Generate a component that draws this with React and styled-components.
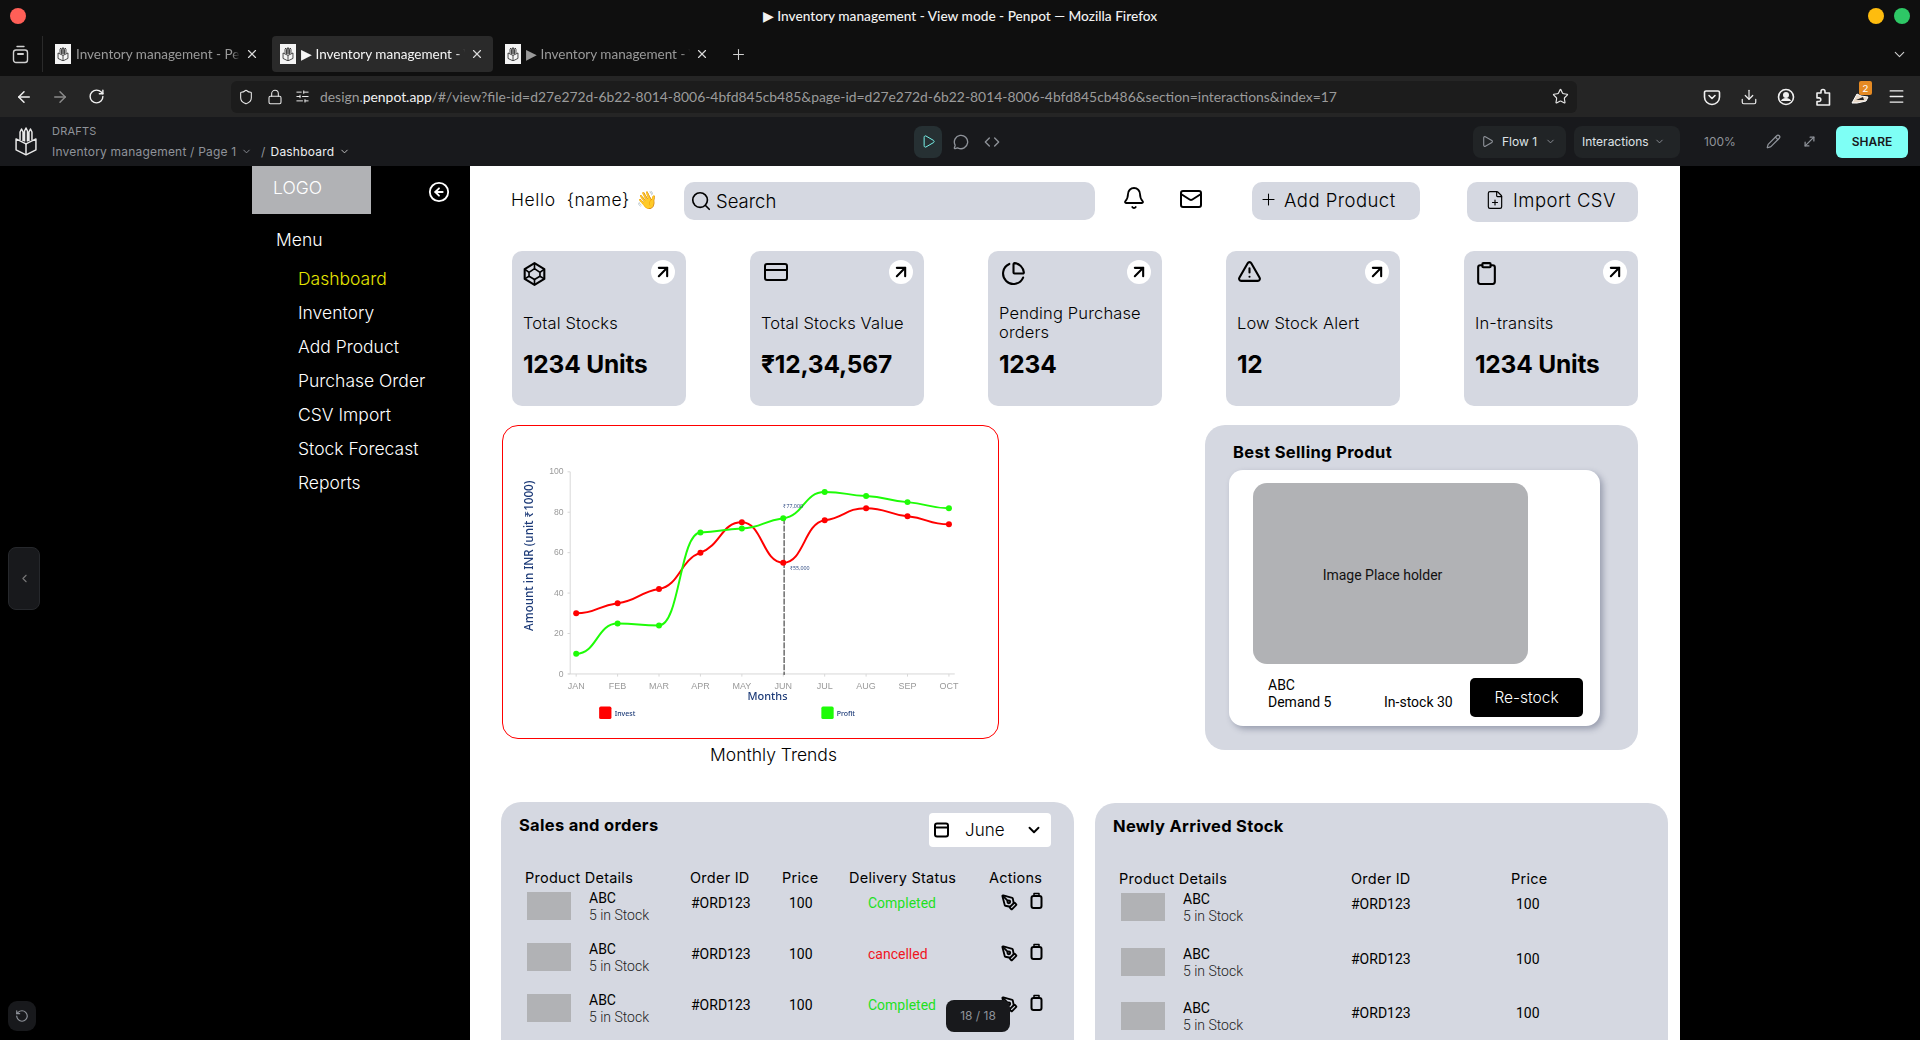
import React from "react";
import styled, { createGlobalStyle } from "styled-components";
import {
  ArrowLeft, ArrowRight, ArrowUpRight, Bell, ChevronDown, CircleArrowLeft, Code,
  Download, FilePlus, Lock, Mail, Menu, MessageCircle, MoveDiagonal, PenTool, PieChart, Pencil, Play,
  Plus, RotateCcw, RotateCw, Search, Shield, ChevronLeft, SlidersHorizontal, Star,
  TriangleAlert, Clipboard, X,
} from "lucide-react";

/* Global
=========================================*/
const GlobalStyle = createGlobalStyle`
  html, body { margin: 0; padding: 0; height: 100%; background: #000; overflow: hidden; }
  * { box-sizing: border-box; }
  body { font-family: "Inter", "DejaVu Sans", sans-serif; }
`;

const UI_FONT = `"Lato", "Noto Sans", sans-serif`;
const HEAD_FONT = `"Inter", "DejaVu Sans", sans-serif`;
const BODY_FONT = `"Roboto", "Liberation Sans", sans-serif`;

const Page = styled.div`
  width: 1920px;
  height: 1040px;
  overflow: hidden;
  display: flex;
  flex-direction: column;
`;

/* Browser chrome
=========================================*/
const TitleBar = styled.div`
  height: 36px;
  background: #0f0f0f;
  display: grid;
  grid-template-columns: 1fr auto 1fr;
  align-items: center;
  padding: 0 10px 4px;
  color: #f2f2f2;
  font: 500 13.7px ${UI_FONT};
`;
const TitleText = styled.span`
  margin-top: -2px;
`;
const Dot = styled.span`
  display: block;
  width: 16px;
  height: 16px;
  border-radius: 50%;
  background: ${(p) => p.$color};
`;
const Dots = styled.div`
  display: flex;
  gap: 10px;
  justify-content: flex-end;
`;
const TabBar = styled.div`
  height: 40px;
  background: #0f0f0f;
  display: flex;
  align-items: flex-start;
  color: #fff;
`;
const TabViewButton = styled.div`
  width: 43px;
  height: 36px;
  padding-top: 9px;
  padding-left: 12px;
  border-right: 1px solid #2a2a2a;
  margin-right: 4px;
  color: #d0d0d0;
`;
const Tab = styled.div`
  width: 221px;
  height: 36px;
  margin-right: 4px;
  border-radius: 4px;
  padding: 0 9px 0 8px;
  display: flex;
  align-items: center;
  gap: 5px;
  background: ${(p) => (p.$active ? "#2a2a2a" : "transparent")};
  color: ${(p) => (p.$active ? "#f5f5f5" : "#9a9a9a")};
  font: 400 13.5px ${UI_FONT};
`;
const TabTitle = styled.span`
  flex: 1;
  overflow: hidden;
  white-space: nowrap;
  mask-image: linear-gradient(to right, #000 95%, transparent);
`;
const TabClose = styled(X)`
  color: #d8d8d8;
  flex: none;
`;
const Favicon = styled.span`
  width: 16px;
  height: 20px;
  background: #f4f4f4;
  display: flex;
  align-items: center;
  justify-content: center;
  flex: none;
  color: #111;
`;
const NewTab = styled.div`
  margin: 10px 0 0 8px;
  color: #d0d0d0;
`;
const TabOverflow = styled.div`
  margin: 10px 12px 0 auto;
  color: #d0d0d0;
`;
const NavBar = styled.div`
  height: 41px;
  background: #252525;
  display: flex;
  align-items: center;
  padding-left: 15px;
  color: #f0f0f0;
`;
const NavButton = styled.span`
  width: 18px;
  display: flex;
  justify-content: center;
  margin-right: ${(p) => p.$gap ?? 18}px;
  color: ${(p) => (p.$dim ? "#8a8a8a" : "#f0f0f0")};
`;
const UrlField = styled.div`
  width: 1346px;
  height: 32px;
  margin-left: 126px;
  background: #1c1c1c;
  border-radius: 6px;
  display: flex;
  align-items: center;
  padding: 0 8px 0 7px;
  color: #e8e8e8;
`;
const UrlIcon = styled.span`
  width: 16px;
  display: flex;
  justify-content: center;
  margin-right: ${(p) => p.$gap}px;
`;
const UrlText = styled.div`
  flex: 1;
  color: #9b9b9b;
  font: 400 13.9px ${UI_FONT};
  white-space: nowrap;
  b {
    color: #f2f2f2;
    font-weight: 400;
  }
`;
const ToolGroup = styled.div`
  display: flex;
  align-items: center;
  gap: 18px;
  margin-left: 125px;
`;
const ToolIcon = styled.span`
  position: relative;
  width: 19px;
  display: flex;
  justify-content: center;
`;
const CountBadge = styled.span`
  position: absolute;
  top: -9px;
  left: 9px;
  width: 13px;
  height: 14px;
  background: #e58a23;
  border-radius: 2px;
  color: #fff;
  font: 400 10px/14px ${UI_FONT};
  text-align: center;
`;

/* Penpot toolbar
=========================================*/
const PenpotBar = styled.div`
  height: 49px;
  background: #18191c;
  display: flex;
  align-items: center;
  padding: 0 12px 0 14px;
  color: #8f939a;
  font: 400 12px ${HEAD_FONT};
`;
const BarLogo = styled.span`
  display: flex;
  color: #e8e8e8;
`;
const Crumbs = styled.div`
  width: 862px;
  margin-left: 14px;
  display: flex;
  flex-direction: column;
  gap: 6px;
  font-size: 12px;
  letter-spacing: 0.2px;
`;
const CrumbLine = styled.div`
  display: flex;
  align-items: center;
  gap: 5px;
  font-size: ${(p) => p.$size || 12}px;
  b {
    color: #eef0f2;
    font-weight: 400;
  }
`;
const PlayButton = styled.div`
  width: 28px;
  height: 32px;
  border-radius: 8px;
  background: #263033;
  color: #7efff5;
  display: flex;
  align-items: center;
  justify-content: center;
`;
const BarIcon = styled.span`
  display: flex;
  margin-left: ${(p) => p.$gap}px;
  color: #8f939a;
`;
const BarSelect = styled.div`
  width: ${(p) => p.$w}px;
  height: 32px;
  margin-left: ${(p) => p.$gap}px;
  border-radius: 8px;
  background: #212426;
  color: #dfe2e5;
  display: flex;
  align-items: center;
  gap: ${(p) => p.$inner || 5}px;
  padding: 0 8px;
  font-size: 12px;
  white-space: nowrap;
`;
const Zoom = styled.span`
  width: 32px;
  margin-left: 24px;
  font-size: 12px;
`;
const ShareButton = styled.div`
  width: 72px;
  height: 32px;
  margin-left: 19px;
  border-radius: 6px;
  background: #7efff5;
  color: #18191c;
  font: 600 12px/32px ${HEAD_FONT};
  text-align: center;
`;

/* Viewer
=========================================*/
const Viewer = styled.div`
  position: relative;
  flex: 1;
  display: flex;
  background: #000;
  overflow: hidden;
`;
const Gutter = styled.div`
  width: 252px;
`;
const CollapseTab = styled.div`
  position: absolute;
  left: 8px;
  top: 381px;
  width: 32px;
  height: 63px;
  background: #18191c;
  border: 1px solid #26282c;
  border-radius: 8px;
  color: #777;
  display: flex;
  align-items: center;
  justify-content: center;
`;
const ResetButton = styled.div`
  position: absolute;
  left: 8px;
  top: 835px;
  width: 28px;
  height: 30px;
  background: #18191c;
  border-radius: 9px;
  color: #8f939a;
  display: flex;
  align-items: center;
  justify-content: center;
`;
const PageCounter = styled.div`
  position: absolute;
  left: 946px;
  top: 834px;
  width: 64px;
  height: 32px;
  background: #18191c;
  border-radius: 8px;
  color: #8f939a;
  font: 400 12px/32px ${HEAD_FONT};
  text-align: center;
`;

/* Sidebar
=========================================*/
const Sidebar = styled.aside`
  width: 218px;
  color: #fff;
  font: 300 17.5px ${HEAD_FONT};
`;
const SideHead = styled.div`
  display: flex;
  align-items: flex-start;
`;
const Logo = styled.div`
  width: 119px;
  height: 48px;
  background: #b1b2b5;
  padding-left: 21px;
  color: #fff;
  line-height: 43px;
`;
const BackIcon = styled(CircleArrowLeft)`
  margin: 15px 0 0 57px;
`;
const MenuTitle = styled.div`
  margin: 15px 0 11px;
  padding-left: 24px;
  line-height: 22px;
`;
const MenuItem = styled.div`
  height: 34px;
  padding-left: 46px;
  line-height: 34px;
  color: ${(p) => (p.$active ? "#e6e600" : "#fff")};
`;

/* Main
=========================================*/
const Main = styled.main`
  width: 1210px;
  background: #fff;
  padding: 16px 0 0 42px;
  color: #000;
  overflow: hidden;
`;
const Header = styled.div`
  height: 40px;
  display: flex;
  align-items: flex-start;
`;
const Hello = styled.div`
  width: 172px;
  height: 34px;
  margin-left: -1px;
  flex: none;
  display: flex;
  align-items: center;
  font: 300 17.5px ${HEAD_FONT};
  letter-spacing: 0.6px;
  white-space: pre;
`;
const SearchBox = styled.div`
  width: 411px;
  height: 38px;
  margin-left: 1px;
  border-radius: 10px;
  background: #d5d8e1;
  display: flex;
  align-items: center;
  gap: 4px;
  padding: 0 0 1px 6px;
  font: 300 18.5px ${HEAD_FONT};
`;
const HeadIcon = styled.span`
  display: flex;
  margin: ${(p) => p.$top || 4}px 0 0 ${(p) => p.$gap}px;
`;
const HeadButton = styled.div`
  width: ${(p) => p.$w}px;
  height: ${(p) => p.$h}px;
  margin-left: ${(p) => p.$gap}px;
  border-radius: 10px;
  background: #d5d8e1;
  display: flex;
  align-items: flex-start;
  padding: 8px 0 0 ${(p) => p.$pad}px;
  gap: ${(p) => p.$inner}px;
  font: 300 18.5px/20px ${HEAD_FONT};
  letter-spacing: 0.45px;
  white-space: nowrap;
`;

const Cards = styled.div`
  margin-top: 29px;
  display: flex;
  gap: 64px;
`;
const Card = styled.div`
  position: relative;
  width: 174px;
  height: 155px;
  border-radius: 10px;
  background: #d5d8e1;
  padding: 10px 11px 0;
`;
const CardIcon = styled.div`
  height: 42px;
  display: flex;
  align-items: flex-start;
  padding-left: ${(p) => p.$x || 0}px;
  svg {
    margin-top: ${(p) => p.$y || 0}px;
    margin-left: ${(p) => p.$nudge || 0}px;
  }
`;
const CardOpen = styled.span`
  position: absolute;
  top: 9px;
  right: 11px;
  width: 24px;
  height: 24px;
  border-radius: 50%;
  background: #fff;
  display: flex;
  align-items: center;
  justify-content: center;
`;
const CardLabel = styled.div`
  height: 40px;
  display: flex;
  align-items: center;
  font: 300 16.5px/19px ${HEAD_FONT};
  letter-spacing: 0.15px;
`;
const CardValue = styled.div`
  margin-top: 7px;
  font: 700 24.5px/28px ${HEAD_FONT};
  letter-spacing: -0.2px;
`;

const MidRow = styled.div`
  margin: 19px 0 0 -10px;
  display: flex;
  align-items: flex-start;
`;
const ChartColumn = styled.div`
  width: 497px;
  height: 325px;
`;
const ChartBox = styled.div`
  height: 314px;
  border: 1px solid #f00;
  border-radius: 16px;
  overflow: hidden;
`;
const ChartSvg = styled.svg`
  display: block;
  width: 100%;
  height: 100%;
  filter: blur(0.25px);
`;
const Caption = styled.div`
  margin-top: 4px;
  padding-left: 46px;
  text-align: center;
  font: 300 17.5px/24px ${HEAD_FONT};
`;

const BestCard = styled.section`
  width: 433px;
  height: 325px;
  margin-left: 206px;
  border-radius: 20px;
  background: #d5d8e1;
  padding: 15px 38px 0 24px;
`;
const PanelTitle = styled.h3`
  margin: 0 0 0 4px;
  font: 700 16.5px/24px ${HEAD_FONT};
  letter-spacing: 0.35px;
`;
const BestInner = styled.div`
  height: 256px;
  margin-top: 6px;
  border-radius: 14px;
  background: #fff;
  box-shadow: 3px 3px 6px rgba(40, 50, 80, 0.35);
  padding: 13px 17px 0 24px;
`;
const Placeholder = styled.div`
  width: 275px;
  height: 181px;
  border-radius: 14px;
  background: #b1b2b5;
  display: flex;
  align-items: center;
  justify-content: center;
  padding: 2px 16px 0 0;
  font: 400 14px ${BODY_FONT};
  color: #111;
`;
const BestFoot = styled.div`
  margin-top: 14px;
  display: flex;
  align-items: flex-start;
  font: 400 14px/17px ${BODY_FONT};
`;
const BestName = styled.div`
  width: 116px;
  margin: -1px 0 0 15px;
`;
const BestStock = styled.div`
  width: 86px;
  margin-top: 16px;
`;
const RestockButton = styled.div`
  width: 113px;
  height: 39px;
  border-radius: 5px;
  background: #000;
  color: #fff;
  font: 300 15.5px/39px ${HEAD_FONT};
  text-align: center;
`;

const BottomRow = styled.div`
  margin: 52px 0 0 -11px;
  display: flex;
  gap: 21px;
  align-items: flex-start;
`;
const Panel = styled.section`
  width: 573px;
  height: 260px;
  margin-top: ${(p) => p.$top || 0}px;
  border-radius: 20px 20px 0 0;
  background: #d5d8e1;
  padding: 11px 0 0 18px;
`;
const PanelHead = styled.div`
  height: 34px;
  display: flex;
  align-items: flex-start;
  justify-content: space-between;
  padding-right: 23px;
  h3 {
    margin: 0;
    font: 700 16.5px/24px ${HEAD_FONT};
    letter-spacing: 0.3px;
  }
`;
const MonthSelect = styled.div`
  width: 122px;
  height: 34px;
  border-radius: 4px;
  background: #fff;
  display: flex;
  align-items: center;
  padding-left: 4px;
  font: 300 17px ${HEAD_FONT};
  span {
    width: 60px;
    margin-left: 14px;
  }
`;
const TableRow = styled.div`
  display: grid;
  grid-template-columns: ${(p) => p.$cols};
  padding-left: 6px;
  height: ${(p) => p.$h}px;
  align-items: start;
`;
const TableHead = styled(TableRow)`
  margin-top: 21px;
  margin-bottom: 4px;
  font: 400 14.5px/20px ${HEAD_FONT};
  letter-spacing: 0.25px;
`;
const ProductCell = styled.div`
  display: flex;
  padding-left: 2px;
`;
const Thumb = styled.div`
  width: 44px;
  height: 28px;
  background: #b1b2b5;
`;
const ProductText = styled.div`
  margin: -2px 0 0 18px;
  font: 400 14px/17px ${BODY_FONT};
  small {
    display: block;
    font-size: 14px;
    font-weight: 300;
    color: #222;
  }
`;
const Cell = styled.div`
  padding-left: ${(p) => p.$pad || 0}px;
  font: 400 14px/22px ${BODY_FONT};
  color: ${(p) => p.$color || "#000"};
`;
const Actions = styled.div`
  display: flex;
  align-items: center;
  gap: 12px;
  height: 20px;
  padding-left: 12px;
`;
const TrashSvg = styled.svg`
  margin-top: -3px;
`;

/* Icons drawn by hand
=========================================*/
function PenpotLogo({ size }) {
  return (
    <svg width={size} height={size * 1.2} viewBox="0 0 24 29" fill="none" stroke="currentColor" strokeWidth="1.5" strokeLinejoin="round">
      <path d="M2 12v11l10 5 10-5V12l-10 5z" />
      <path d="M12 17v11" />
      <path d="M6 13V5l1.500-3L9 5v9M10.500 14.500V4l1.500-3 1.500 3v10.500M15 14V5l1.500-3L18 5v8" />
    </svg>
  );
}

function StockIcon() {
  return (
    <svg width="23" height="24" viewBox="2 1 20 22" fill="none" stroke="#000" strokeWidth="1.900" strokeLinejoin="round">
      <path d="M12 2l9 5.500v9L12 22l-9-5.500v-9z" />
      <path d="M12 7l5 3.500v3.500L12 17l-5-3v-3.500z" strokeWidth="1.500" />
      <path d="M12 2v5M3 7.500l4 3M21 7.500l-4 3M12 17v5M3 16.500L7 14M21 16.500L17 14" strokeWidth="1.500" />
    </svg>
  );
}

function CardBillIcon() {
  return (
    <svg width="24" height="24" viewBox="0 0 24 24" fill="none" stroke="#000" strokeWidth="2">
      <rect x="1" y="3" width="22" height="16" rx="2" />
      <path d="M1 9h22" />
    </svg>
  );
}

function TrashIcon() {
  return (
    <TrashSvg width="13" height="17" viewBox="0 0 13 17" fill="none" stroke="#000" strokeWidth="2" strokeLinejoin="round">
      <rect x="1.500" y="4" width="10" height="12" rx="2" />
      <path d="M4 1.500h5V4H4z" strokeWidth="1.500" />
    </TrashSvg>
  );
}

function CalendarIcon() {
  return (
    <svg width="18" height="18" viewBox="0 0 18 18" fill="none" stroke="#000" strokeWidth="2">
      <rect x="2" y="2.500" width="13" height="13" rx="2" />
      <path d="M2 6.500h13" />
    </svg>
  );
}

function PocketIcon() {
  return (
    <svg width="18" height="18" viewBox="0 0 18 18" fill="none" stroke="currentColor" strokeWidth="1.600" strokeLinecap="round" strokeLinejoin="round">
      <path d="M3 3h12a1.500 1.500 0 0 1 1.500 1.500V9a7.500 7.500 0 0 1-15 0V4.500A1.500 1.500 0 0 1 3 3z" />
      <path d="M6 7.500l3 3 3-3" />
    </svg>
  );
}

function ProfileIcon() {
  return (
    <svg width="18" height="18" viewBox="0 0 18 18" fill="none" stroke="currentColor" strokeWidth="1.600">
      <circle cx="9" cy="9" r="7.500" />
      <circle cx="9" cy="7" r="3" fill="currentColor" stroke="none" />
      <path d="M4 13a5 3 0 0 1 10 0z" fill="currentColor" stroke="none" />
    </svg>
  );
}

function PuzzleIcon() {
  return (
    <svg width="16" height="18" viewBox="0 0 16 18" fill="none" stroke="currentColor" strokeWidth="1.600" strokeLinejoin="round">
      <path d="M2 5h4V3.500a2 2 0 0 1 4 0V5h4.500v12H2v-3.500h2a1.800 1.800 0 0 0 0-3.600H2z" />
    </svg>
  );
}

function TabViewIcon() {
  return (
    <svg width="17" height="19" viewBox="0 0 17 19" fill="none" stroke="currentColor" strokeWidth="1.400" strokeLinecap="round">
      <path d="M5 1.500h7" />
      <rect x="1.500" y="5" width="14" height="12.500" rx="2.500" />
      <path d="M6 9h5" strokeWidth="2" />
    </svg>
  );
}

function ExtensionIcon() {
  return (
    <svg width="18" height="14" viewBox="0 0 18 14">
      <path d="M1 13l5-9 4 2 7 1-2 4-9 2z" fill="#e9d9c8" stroke="#fff" />
      <path d="M5 10l7-3 1 3z" fill="#222" />
    </svg>
  );
}

/* Chart
=========================================*/
const MONTHS = ["JAN", "FEB", "MAR", "APR", "MAY", "JUN", "JUL", "AUG", "SEP", "OCT"];
const INVEST = [30, 35, 42, 60, 75, 55, 76, 82, 78, 74];
const PROFIT = [10, 25, 24, 70, 72, 77, 90, 88, 85, 82];
const xAt = (i) => 228 + i * 124.5;
const yAt = (v) => 749 - v * 6.09;

function smoothPath(values) {
  const pts = values.map((v, i) => [xAt(i), yAt(v)]);
  const slope = (i) => {
    if (i === 0 || i === pts.length - 1) return 0;
    const a = pts[i][1] - pts[i - 1][1];
    const b = pts[i + 1][1] - pts[i][1];
    if (a * b <= 0) return 0;
    return (Math.sign(a) * Math.min(Math.abs(a), Math.abs(b))) / 2;
  };
  let d = `M${pts[0][0]} ${pts[0][1]}`;
  for (let i = 0; i < pts.length - 1; i++) {
    const dx = (pts[i + 1][0] - pts[i][0]) * 0.5;
    d += `C${pts[i][0] + dx} ${pts[i][1] + slope(i) / 2} ${pts[i + 1][0] - dx} ${pts[i + 1][1] - slope(i + 1) / 2} ${pts[i + 1][0]} ${pts[i + 1][1]}`;
  }
  return d;
}

function TrendChart() {
  const navy = "#1d3b78";
  return (
    <ChartSvg viewBox="8 2 1488 940" preserveAspectRatio="none">
      <path d="M210 140V749M204 749H1366" stroke="#d8d8d8" strokeWidth="3" fill="none" />
      {[0, 20, 40, 60, 80, 100].map((v) => (
        <g key={v}>
          <path d={`M202 ${yAt(v)}H210`} stroke="#d8d8d8" strokeWidth="3" />
          <text x="190" y={yAt(v) + 8} textAnchor="end" fontSize="26" fill="#999" fontFamily="Liberation Sans">{v}</text>
        </g>
      ))}
      {MONTHS.map((m, i) => (
        <g key={m}>
          <path d={`M${xAt(i)} 749v8`} stroke="#d8d8d8" strokeWidth="3" />
          <text x={xAt(i)} y="795" textAnchor="middle" fontSize="27" fill="#999" fontFamily="Liberation Sans">{m}</text>
        </g>
      ))}
      <path d="M853 280V752" stroke="#222" strokeWidth="3" strokeDasharray="18 4" />
      <path d={smoothPath(INVEST)} stroke="#f00" strokeWidth="6" fill="none" />
      <path d={smoothPath(PROFIT)} stroke="#1efc07" strokeWidth="6" fill="none" />
      {INVEST.map((v, i) => <circle key={i} cx={xAt(i)} cy={yAt(v)} r="9" fill="#f00" />)}
      {PROFIT.map((v, i) => <circle key={i} cx={xAt(i)} cy={yAt(v)} r="9" fill="#1efc07" />)}
      <text x="851" y="248" fontSize="16" fill={navy} fontFamily="Open Sans">₹77,000</text>
      <text x="871" y="437" fontSize="16" fill={navy} fontFamily="Open Sans">₹55,000</text>
      <text x="803" y="829" textAnchor="middle" fontSize="33" fontWeight="500" fill={navy} fontFamily="Noto Sans">Months</text>
      <text transform="translate(98 393) rotate(-90)" textAnchor="middle" fontSize="35" fontWeight="500" fill={navy} fontFamily="Noto Sans">Amount in INR (unit ₹1000)</text>
      <rect x="297" y="847" width="37" height="38" rx="5" fill="#f00" />
      <text x="344" y="875" fontSize="21" fontWeight="500" fill={navy} fontFamily="Noto Sans">Invest</text>
      <rect x="965" y="847" width="37" height="38" rx="5" fill="#1efc07" />
      <text x="1011" y="875" fontSize="21" fontWeight="500" fill={navy} fontFamily="Noto Sans">Profit</text>
    </ChartSvg>
  );
}

/* Data
=========================================*/
const CARDS = [
  { icon: <StockIcon />, x: 0, y: 1, label: "Total Stocks", value: "1234 Units" },
  { icon: <CardBillIcon />, x: 3, y: 0, label: "Total Stocks Value", value: "₹12,34,567" },
  { icon: <PieChart size={25} color="#000" strokeWidth={2} />, x: 2, y: 0, label: "Pending Purchase orders", value: "1234" },
  { icon: <TriangleAlert size={25} color="#000" strokeWidth={2} />, x: 0, y: -2, label: "Low Stock Alert", value: "12" },
  { icon: <Clipboard size={25} color="#000" strokeWidth={2} />, x: 0, y: 0, nudge: -1, label: "In-transits", value: "1234 Units" },
];
const MENU = ["Dashboard", "Inventory", "Add Product", "Purchase Order", "CSV Import", "Stock Forecast", "Reports"];
const ORDERS = [
  { status: "Completed", color: "#1fe01f" },
  { status: "cancelled", color: "#f0141e" },
  { status: "Completed", color: "#1fe01f" },
];
const SALES_COLS = "165px 92px 67px 140px 80px";
const STOCK_COLS = "232px 160px 100px";

function Product() {
  return (
    <ProductCell>
      <Thumb />
      <ProductText>
        ABC
        <small>5 in Stock</small>
      </ProductText>
    </ProductCell>
  );
}

function App() {
  return (
    <Page>
      <GlobalStyle />
      <TitleBar>
        <Dot $color="#ff5f57" />
        <TitleText>▶ Inventory management - View mode - Penpot — Mozilla Firefox</TitleText>
        <Dots>
          <Dot $color="#febc0e" />
          <Dot $color="#2ec866" />
        </Dots>
      </TitleBar>
      <TabBar>
        <TabViewButton>
          <TabViewIcon />
        </TabViewButton>
        {["Inventory management - Penpot", "▶ Inventory management - View mode", "▶ Inventory management - View mode"].map((t, i) => (
          <Tab key={i} $active={i === 1}>
            <Favicon>
              <PenpotLogo size={12} />
            </Favicon>
            <TabTitle>{t}</TabTitle>
            <TabClose size={14} />
          </Tab>
        ))}
        <NewTab>
          <Plus size={17} strokeWidth={1.5} />
        </NewTab>
        <TabOverflow>
          <ChevronDown size={17} strokeWidth={1.5} />
        </TabOverflow>
      </TabBar>
      <NavBar>
        <NavButton><ArrowLeft size={18} /></NavButton>
        <NavButton $dim><ArrowRight size={18} /></NavButton>
        <NavButton $gap={0}><RotateCw size={17} /></NavButton>
        <UrlField>
          <UrlIcon $gap={13}><Shield size={16} strokeWidth={1.6} /></UrlIcon>
          <UrlIcon $gap={11}><Lock size={16} strokeWidth={1.6} /></UrlIcon>
          <UrlIcon $gap={10}><SlidersHorizontal size={15} strokeWidth={1.6} /></UrlIcon>
          <UrlText>
            design.<b>penpot.app</b>/#/view?file-id=d27e272d-6b22-8014-8006-4bfd845cb485&amp;page-id=d27e272d-6b22-8014-8006-4bfd845cb486&amp;section=interactions&amp;index=17
          </UrlText>
          <Star size={17} strokeWidth={1.6} />
        </UrlField>
        <ToolGroup>
          <ToolIcon><PocketIcon /></ToolIcon>
          <ToolIcon><Download size={18} strokeWidth={1.6} /></ToolIcon>
          <ToolIcon><ProfileIcon /></ToolIcon>
          <ToolIcon><PuzzleIcon /></ToolIcon>
          <ToolIcon><ExtensionIcon /><CountBadge>2</CountBadge></ToolIcon>
          <ToolIcon><Menu size={19} strokeWidth={1.6} /></ToolIcon>
        </ToolGroup>
      </NavBar>
      <PenpotBar>
        <BarLogo><PenpotLogo size={24} /></BarLogo>
        <Crumbs>
          <CrumbLine $size={11}>DRAFTS</CrumbLine>
          <CrumbLine>
            Inventory management / Page 1 <ChevronDown size={11} /> &nbsp;/ <b>Dashboard</b> <ChevronDown size={11} color="#ccc" />
          </CrumbLine>
        </Crumbs>
        <PlayButton><Play size={15} strokeWidth={1.5} /></PlayButton>
        <BarIcon $gap={11}><MessageCircle size={16} /></BarIcon>
        <BarIcon $gap={15}><Code size={16} /></BarIcon>
        <BarSelect $w={93} $gap={473} $inner={8}>
          <Play size={13} color="#8f939a" /> Flow 1 <ChevronDown size={11} color="#8f939a" />
        </BarSelect>
        <BarSelect $w={106} $gap={8}>
          Interactions <ChevronDown size={11} color="#8f939a" />
        </BarSelect>
        <Zoom>100%</Zoom>
        <BarIcon $gap={30}><Pencil size={15} /></BarIcon>
        <BarIcon $gap={21}><MoveDiagonal size={15} /></BarIcon>
        <ShareButton>SHARE</ShareButton>
      </PenpotBar>
      <Viewer>
        <Gutter />
        <Sidebar>
          <SideHead>
            <Logo>LOGO</Logo>
            <BackIcon size={22} strokeWidth={2} />
          </SideHead>
          <MenuTitle>Menu</MenuTitle>
          {MENU.map((m, i) => (
            <MenuItem key={m} $active={i === 0}>{m}</MenuItem>
          ))}
        </Sidebar>
        <Main>
          <Header>
            <Hello>Hello  {"{name}"} 👋</Hello>
            <SearchBox>
              <Search size={22} strokeWidth={1.8} />
              Search
            </SearchBox>
            <HeadIcon $gap={27}><Bell size={24} strokeWidth={1.8} /></HeadIcon>
            <HeadIcon $gap={33} $top={5}><Mail size={24} strokeWidth={2} /></HeadIcon>
            <HeadButton $w={168} $h={38} $gap={49} $pad={7} $inner={6}>
              <Plus size={19} strokeWidth={1.3} />
              Add Product
            </HeadButton>
            <HeadButton $w={171} $h={40} $gap={47} $pad={18} $inner={8}>
              <FilePlus size={20} strokeWidth={1.4} />
              Import CSV
            </HeadButton>
          </Header>
          <Cards>
            {CARDS.map((c) => (
              <Card key={c.label}>
                <CardIcon $x={c.x} $y={c.y} $nudge={c.nudge}>{c.icon}</CardIcon>
                <CardOpen><ArrowUpRight size={20} color="#000" strokeWidth={2.5} /></CardOpen>
                <CardLabel>{c.label}</CardLabel>
                <CardValue>{c.value}</CardValue>
              </Card>
            ))}
          </Cards>
          <MidRow>
            <ChartColumn>
              <ChartBox>
                <TrendChart />
              </ChartBox>
              <Caption>Monthly Trends</Caption>
            </ChartColumn>
            <BestCard>
              <PanelTitle>Best Selling Produt</PanelTitle>
              <BestInner>
                <Placeholder>Image Place holder</Placeholder>
                <BestFoot>
                  <BestName>ABC<br />Demand 5</BestName>
                  <BestStock>In-stock 30</BestStock>
                  <RestockButton>Re-stock</RestockButton>
                </BestFoot>
              </BestInner>
            </BestCard>
          </MidRow>
          <BottomRow>
            <Panel>
              <PanelHead>
                <h3>Sales and orders</h3>
                <MonthSelect>
                  <CalendarIcon />
                  <span>June</span>
                  <ChevronDown size={18} color="#000" strokeWidth={2.5} />
                </MonthSelect>
              </PanelHead>
              <TableHead $cols={SALES_COLS} $h={20}>
                <div>Product Details</div>
                <div>Order ID</div>
                <div>Price</div>
                <div>Delivery Status</div>
                <div>Actions</div>
              </TableHead>
              {ORDERS.map((o, i) => (
                <TableRow key={i} $cols={SALES_COLS} $h={51}>
                  <Product />
                  <Cell $pad={1}>#ORD123</Cell>
                  <Cell $pad={7}>100</Cell>
                  <Cell $pad={19} $color={o.color}>{o.status}</Cell>
                  <Actions>
                    <PenTool size={17} color="#000" strokeWidth={2.6} />
                    <TrashIcon />
                  </Actions>
                </TableRow>
              ))}
            </Panel>
            <Panel $top={1}>
              <PanelHead>
                <h3>Newly Arrived Stock</h3>
              </PanelHead>
              <TableHead $cols={STOCK_COLS} $h={20}>
                <div>Product Details</div>
                <div>Order ID</div>
                <div>Price</div>
              </TableHead>
              {[0, 1, 2].map((i) => (
                <TableRow key={i} $cols={STOCK_COLS} $h={54.5}>
                  <Product />
                  <Cell>#ORD123</Cell>
                  <Cell $pad={5}>100</Cell>
                </TableRow>
              ))}
            </Panel>
          </BottomRow>
        </Main>
        <CollapseTab><ChevronLeft size={13} /></CollapseTab>
        <ResetButton><RotateCcw size={14} /></ResetButton>
        <PageCounter>18 / 18</PageCounter>
      </Viewer>
    </Page>
  );
}

export default App;
